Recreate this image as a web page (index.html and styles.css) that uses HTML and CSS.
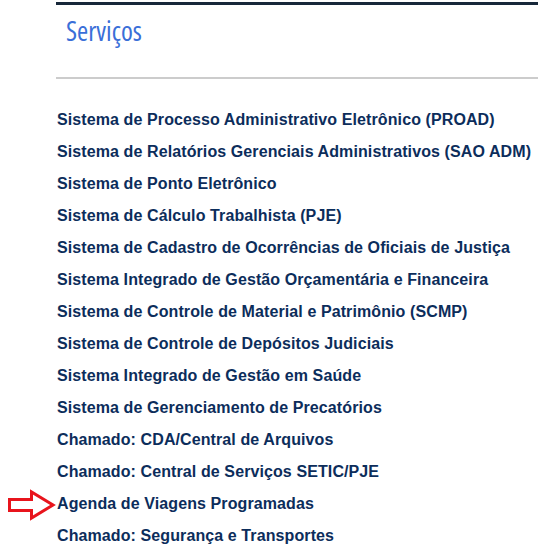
FILE: index.html
```html
<!DOCTYPE html>
<html lang="pt">
<head>
<meta charset="utf-8">
<title>Serviços</title>
<link rel="stylesheet" href="styles.css">
</head>
<body>
<div class="panel">
  <h2 class="panel-title">Serviços</h2>
  <ul class="services">
    <li><a href="#">Sistema de Processo Administrativo Eletrônico (PROAD)</a></li>
    <li><a href="#">Sistema de Relatórios Gerenciais Administrativos (SAO ADM)</a></li>
    <li><a href="#">Sistema de Ponto Eletrônico</a></li>
    <li><a href="#">Sistema de Cálculo Trabalhista (PJE)</a></li>
    <li><a href="#">Sistema de Cadastro de Ocorrências de Oficiais de Justiça</a></li>
    <li><a href="#">Sistema Integrado de Gestão Orçamentária e Financeira</a></li>
    <li><a href="#">Sistema de Controle de Material e Patrimônio (SCMP)</a></li>
    <li><a href="#">Sistema de Controle de Depósitos Judiciais</a></li>
    <li><a href="#">Sistema Integrado de Gestão em Saúde</a></li>
    <li><a href="#">Sistema de Gerenciamento de Precatórios</a></li>
    <li><a href="#">Chamado: CDA/Central de Arquivos</a></li>
    <li><a href="#">Chamado: Central de Serviços SETIC/PJE</a></li>
    <li class="marked">
      <svg class="arrow" width="50" height="36" viewBox="0 0 50 36" aria-hidden="true">
        <path d="M1.5 12.5 H23.5 V5 L45 18 L23.5 31 V23.5 H1.5 Z" fill="none" stroke="#e8141c" stroke-width="3" stroke-linejoin="miter"/>
      </svg>
      <a href="#">Agenda de Viagens Programadas</a>
    </li>
    <li><a href="#">Chamado: Segurança e Transportes</a></li>
  </ul>
</div>
</body>
</html>
```
FILE: styles.css
```css
html, body {
  margin: 0;
  padding: 0;
  background: #ffffff;
}

.panel {
  margin-left: 56px;
  width: 482px;
  padding-top: 2px;
}

.panel-title {
  margin: 0;
  border-top: 3px solid #17283a;
  border-bottom: 2px solid #cccccc;
  height: 72px;
  box-sizing: content-box;
  padding: 0 0 0 10px;
  font-family: "Open Sans", sans-serif;
  font-stretch: 75%;
  font-weight: 400;
  font-size: 27px;
  line-height: 52px;
  color: #3a6fd8;
}

.services {
  list-style: none;
  margin: 25px 0 0 0;
  padding: 0 0 0 1px;
}

.services li {
  position: relative;
  height: 32px;
  line-height: 32px;
  white-space: nowrap;
}

.services a {
  font-family: "Liberation Sans", Arial, sans-serif;
  font-weight: bold;
  font-size: 16px;
  letter-spacing: 0.1px;
  color: #0c2d5b;
  text-decoration: none;
}

.arrow {
  position: absolute;
  left: -49px;
  top: -1px;
}
```
